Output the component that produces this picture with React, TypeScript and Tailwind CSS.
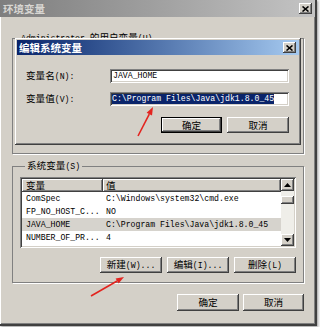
import React from "react";

const cjk = "font-['Noto_Sans_CJK_SC',sans-serif]";
const mono = "font-['Liberation_Mono',monospace]";
const raised =
  "shadow-[inset_-1px_-1px_0_#404040,inset_1px_1px_0_#ffffff,inset_-2px_-2px_0_#808080,inset_2px_2px_0_#d4d0c8]";
const sunken =
  "shadow-[inset_1px_1px_0_#808080,inset_-1px_-1px_0_#ffffff,inset_2px_2px_0_#404040,inset_-2px_-2px_0_#d4d0c8]";

type LabelProps = { zh: string; acc?: string; className?: string };

function Label({ zh, acc, className = "" }: LabelProps) {
  return (
    <span className={`whitespace-nowrap leading-[10px] ${className}`}>
      <span className={`${cjk} text-[9.6px]`}>{zh}</span>
      {acc && <span className={`${mono} text-[8.2px]`}>{acc}</span>}
    </span>
  );
}

function Button({
  zh,
  acc,
  w = "w-[62px]",
  h = "h-[16px]",
  isDefault = false,
}: LabelProps & { w?: string; h?: string; isDefault?: boolean }) {
  return (
    <div
      className={`${w} ${h} flex items-center justify-center bg-[#d4d0c8] text-black ${
        isDefault ? "border border-black" : ""
      } ${raised}`}
    >
      <Label zh={zh} acc={acc} />
    </div>
  );
}

function CloseBtn() {
  return (
    <div className={`w-[13px] h-[11px] flex items-center justify-center bg-[#d4d0c8] ${raised}`}>
      <svg width="7" height="6" viewBox="0 0 7 6">
        <path d="M0.5 0.5 L6.5 5.5 M6.5 0.5 L0.5 5.5" stroke="#000" strokeWidth="1.6" />
      </svg>
    </div>
  );
}

function ScrollArrow({ up }: { up?: boolean }) {
  return (
    <div className={`w-[13px] h-[12px] flex items-center justify-center bg-[#d4d0c8] ${raised}`}>
      <svg width="7" height="4" viewBox="0 0 7 4">
        <path d={up ? "M3.5 0 L7 4 L0 4Z" : "M0 0 L7 0 L3.5 4Z"} fill="#000" />
      </svg>
    </div>
  );
}

const rows = [
  { name: "ComSpec", value: "C:\\Windows\\system32\\cmd.exe" },
  { name: "FP_NO_HOST_C...", value: "NO" },
  { name: "JAVA_HOME", value: "C:\\Program Files\\Java\\jdk1.8.0_45", selected: true },
  { name: "NUMBER_OF_PR...", value: "4" },
];

export default function App() {
  return (
    <div className="relative w-[320px] h-[327px] overflow-hidden bg-[#f4f4f4] text-black text-[9.6px] leading-[10px]">
      {/* outer window: 环境变量 */}
      <div className="flex flex-col w-[317px] h-[326px] bg-[#d4d0c8] border-r-2 border-b-2 border-[#404040] shadow-[inset_1px_0_0_#ffffff,inset_-1px_-1px_0_#808080,1px_1px_2px_rgba(0,0,0,0.35)]">
        <div className="h-[17px] flex items-center justify-between pl-[3px] pr-[3px] bg-linear-to-r from-[#7e7e7e] to-[#c4c4c4]">
          <span className={`${cjk} text-[10.5px] font-bold text-[#d8d6d2] leading-[12px]`}>环境变量</span>
          <CloseBtn />
        </div>

        <div className="flex flex-col pl-[12px]">
          <fieldset className="mt-[15px] w-[292px] border border-[#808080] shadow-[1px_1px_0_#ffffff] pb-[8px]">
            <legend className="ml-[6px] px-[2px] leading-[10px]">
              <span className={`${mono} text-[8.2px]`}>Administrator </span>
              <Label zh=" 的用户变量" acc="(U)" />
            </legend>
            <div className="h-[85px]" />
            <div className="flex justify-end gap-[5px] pr-[7px]">
              <Button zh="新建" acc="(N)..." />
              <Button zh="编辑" acc="(E)..." />
              <Button zh="删除" acc="(D)" />
            </div>
          </fieldset>

          <fieldset className="mt-[6px] w-[292px] border border-[#808080] shadow-[1px_1px_0_#ffffff] px-[7px] pb-[9px]">
            <legend className="ml-[5px] px-[2px] leading-[10px]">
              <Label zh="系统变量" acc="(S)" />
            </legend>
            <div className={`mt-[5px] h-[71px] flex bg-white p-[2px] ${sunken}`}>
              <div className="flex-1 flex flex-col">
                <div className="flex h-[13px]">
                  <div className={`w-[81px] flex items-center pl-[4px] bg-[#d4d0c8] ${raised}`}>
                    <Label zh="变量" />
                  </div>
                  <div className={`flex-1 flex items-center pl-[3px] bg-[#d4d0c8] ${raised}`}>
                    <Label zh="值" />
                  </div>
                </div>
                {rows.map((r) => (
                  <div
                    key={r.name}
                    className={`flex h-[13px] items-center ${mono} text-[8.2px] whitespace-nowrap ${
                      r.selected ? "bg-[#d6d3cd]" : ""
                    }`}
                  >
                    <span className="w-[81px] pl-[4px]">{r.name}</span>
                    <span className="pl-[3px]">{r.value}</span>
                  </div>
                ))}
              </div>
              <div className="w-[13px] flex flex-col bg-[#efeee9]">
                <ScrollArrow up />
                <div className={`mt-[5px] h-[8px] bg-[#d4d0c8] ${raised}`} />
                <div className="flex-1" />
                <ScrollArrow />
              </div>
            </div>
            <div className="mt-[9px] flex justify-end gap-[5px]">
              <Button zh="新建" acc="(W)..." />
              <Button zh="编辑" acc="(I)..." />
              <Button zh="删除" acc="(L)" />
            </div>
          </fieldset>

          <div className="mt-[11px] w-[292px] flex justify-end gap-[4px]">
            <Button zh="确定" h="h-[17px]" />
            <Button zh="取消" w="w-[61px]" h="h-[17px]" />
          </div>
        </div>
      </div>

      {/* dialog window: 编辑系统变量 */}
      <div className={`absolute left-[15px] top-[38px] w-[286px] h-[107px] flex flex-col p-[2px] bg-[#d4d0c8] ${raised}`}>
        <div className="h-[15px] flex items-center justify-between pl-[2px] pr-[3px] bg-linear-to-r from-[#0a246a] to-[#a6caf0]">
          <span className={`${cjk} text-[10.5px] font-bold text-white leading-[12px]`}>编辑系统变量</span>
          <CloseBtn />
        </div>
        <div className="mt-[14px] flex items-center">
          <div className="w-[93px] pl-[9px] flex">
            <Label zh="变量名" acc="(N):" />
          </div>
          <div className={`w-[179px] h-[14px] flex items-center pl-[3px] bg-white ${sunken}`}>
            <span className={`${mono} text-[8.2px] leading-[10px]`}>JAVA_HOME</span>
          </div>
        </div>
        <div className="mt-[9px] flex items-center">
          <div className="w-[93px] pl-[9px] flex">
            <Label zh="变量值" acc="(V):" />
          </div>
          <div className={`w-[179px] h-[14px] flex items-center pl-[2px] bg-white ${sunken}`}>
            <span className={`${mono} text-[8.2px] leading-[10px] bg-[#0a246a] text-white whitespace-nowrap`}>
              C:\Program Files\Java\jdk1.8.0_45
            </span>
          </div>
        </div>
        <div className="mt-[11px] flex justify-end gap-[5px] pr-[10px]">
          <Button zh="确定" w="w-[61px]" isDefault />
          <Button zh="取消" />
        </div>
      </div>

      {/* red arrows */}
      <svg className="absolute inset-0 pointer-events-none" width="320" height="327" viewBox="0 0 320 327">
        <line x1="138" y1="136" x2="149.3" y2="114.1" stroke="#e3241f" strokeWidth="1.6" />
        <polygon points="153,107 152,115.5 146.6,112.7" fill="#e3241f" />
        <line x1="91" y1="296" x2="117.1" y2="281" stroke="#e3241f" strokeWidth="1.6" />
        <polygon points="124,277 118.6,283.6 115.6,278.4" fill="#e3241f" />
      </svg>
    </div>
  );
}
